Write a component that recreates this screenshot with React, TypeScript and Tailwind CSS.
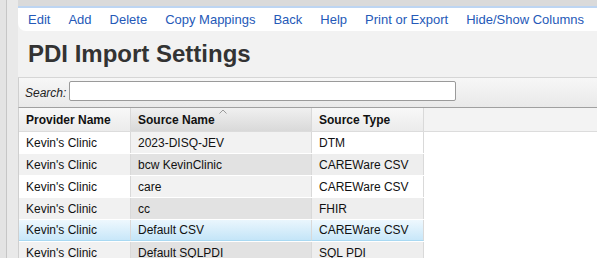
import React from "react";

const navItems = [
  "Edit",
  "Add",
  "Delete",
  "Copy Mappings",
  "Back",
  "Help",
  "Print or Export",
  "Hide/Show Columns",
];

const rows = [
  { provider: "Kevin's Clinic", source: "2023-DISQ-JEV", type: "DTM" },
  { provider: "Kevin's Clinic", source: "bcw KevinClinic", type: "CAREWare CSV" },
  { provider: "Kevin's Clinic", source: "care", type: "CAREWare CSV" },
  { provider: "Kevin's Clinic", source: "cc", type: "FHIR" },
  { provider: "Kevin's Clinic", source: "Default CSV", type: "CAREWare CSV", selected: true },
  { provider: "Kevin's Clinic", source: "Default SQLPDI", type: "SQL PDI" },
];

export default function App() {
  return (
    <div className="w-[597px] h-[258px] overflow-hidden flex bg-[#e6e6e6] font-['Liberation_Sans',Arial,sans-serif]">
      {/* Left gutter */}
      <div className="w-[18px] flex shrink-0">
        <div className="w-[6px] bg-[#e3e3e3]" />
        <div className="w-[1px] bg-[#c6c6c6]" />
        <div className="flex-1 bg-[#e9e9e9]" />
      </div>

      <div className="flex-1 flex flex-col bg-[#f2f2f2] min-w-0">
        <div className="h-[6px] bg-[#dadada] shrink-0" />
        <div className="h-[2px] bg-[#bdd5f2] shrink-0" />

        {/* Nav */}
        <div className="h-[23px] bg-white rounded-bl-[8px] flex items-center pl-[10px] gap-[18px] text-[13px] text-[#2559b8] shrink-0 whitespace-nowrap">
          {navItems.map((item) => (
            <span key={item}>{item}</span>
          ))}
        </div>

        {/* Title */}
        <div className="h-[46px] pl-[10px] pt-[9px] shrink-0">
          <h1 className="text-[24px] leading-[28px] font-bold text-[#333333]">
            PDI Import Settings
          </h1>
        </div>

        {/* Search bar */}
        <div className="h-[31px] border-t border-[#d6d6d6] border-b border-b-[#a0a0a0] border-l border-l-[#cfcfcf] bg-gradient-to-b from-[#f7f7f7] to-[#e9e9e9] flex items-center pl-[6px] gap-[3px] shrink-0">
          <span className="italic text-[12px] text-[#222]">Search:</span>
          <div className="w-[387px] h-[20px] bg-white border border-[#9a9a9a] rounded-[2px] -mt-[3px]" />
        </div>

        {/* Table */}
        <div className="flex-1 bg-white border-l border-[#cfcfcf]">
          {/* Header */}
          <div className="flex h-[24px] bg-[#f1f1f1] border-b border-[#dcdcdc]">
            <div className="w-[112px] border-r border-[#d9d9d9] bg-gradient-to-b from-[#f8f8f8] to-[#ebebeb] px-[7px] flex items-center text-[12px] font-bold text-[#111]">
              Provider Name
            </div>
            <div className="relative w-[181px] border-r border-[#d9d9d9] bg-gradient-to-b from-[#f0f0f0] to-[#d9d9d9] px-[7px] flex items-center text-[12px] font-bold text-[#111]">
              Source Name
              <svg
                className="absolute left-[88px] top-[1px]"
                width="8"
                height="5"
                viewBox="0 0 8 5"
              >
                <polyline
                  points="0.5,4.5 4,1 7.5,4.5"
                  fill="none"
                  stroke="#9a9a9a"
                  strokeWidth="1"
                />
              </svg>
            </div>
            <div className="w-[112px] border-r border-[#d9d9d9] bg-gradient-to-b from-[#f8f8f8] to-[#ebebeb] px-[7px] flex items-center text-[12px] font-bold text-[#111]">
              Source Type
            </div>
            <div className="flex-1 bg-[#f3f3f3]" />
          </div>

          {rows.map((row, i) => {
            const even = i % 2 === 1;
            if (row.selected) {
              return (
                <div
                  key={i}
                  className="flex h-[22px] text-[12px] text-[#111] border-b border-white"
                >
                  <div className="w-[112px] border-r border-[#d9d9d9] border-b border-b-[#a9d9f2] bg-gradient-to-b from-[#eef8fe] to-[#c8e7f9] px-[7px] flex items-center">
                    {row.provider}
                  </div>
                  <div className="w-[181px] border-r border-[#d9d9d9] border-b border-b-[#a9d9f2] bg-gradient-to-b from-[#eaf6fd] to-[#c4e5f8] px-[7px] flex items-center">
                    {row.source}
                  </div>
                  <div className="w-[112px] border-r border-[#d9d9d9] border-b border-b-[#a9d9f2] bg-gradient-to-b from-[#eef8fe] to-[#c8e7f9] px-[7px] flex items-center">
                    {row.type}
                  </div>
                </div>
              );
            }
            return (
              <div
                key={i}
                className="flex h-[22px] text-[12px] text-[#111] border-b border-white"
              >
                <div
                  className={`w-[112px] border-r border-[#d9d9d9] px-[7px] flex items-center ${
                    even ? "bg-[#f1f1f1]" : "bg-white"
                  }`}
                >
                  {row.provider}
                </div>
                <div
                  className={`w-[181px] border-r border-[#d9d9d9] px-[7px] flex items-center ${
                    even ? "bg-[#e2e2e2]" : "bg-[#f2f2f2]"
                  }`}
                >
                  {row.source}
                </div>
                <div
                  className={`w-[112px] border-r border-[#d9d9d9] px-[7px] flex items-center ${
                    even ? "bg-[#eeeeee]" : "bg-white"
                  }`}
                >
                  {row.type}
                </div>
              </div>
            );
          })}
        </div>
      </div>
    </div>
  );
}
